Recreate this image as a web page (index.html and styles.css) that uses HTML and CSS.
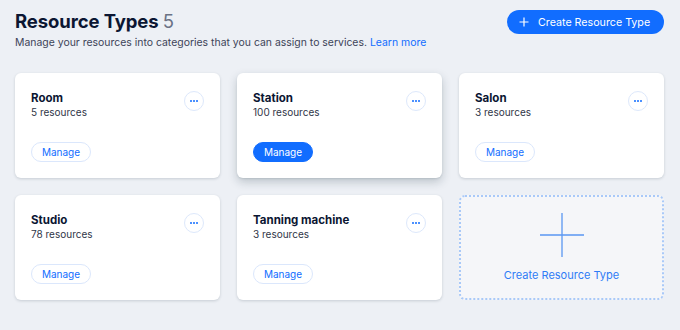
FILE: index.html
```html
<!DOCTYPE html>
<html lang="en">
<head>
<meta charset="utf-8">
<link rel="stylesheet" href="styles.css">
</head>
<body>
<div class="page">
  <header class="header">
    <div class="heading">
      <h1 class="title">Resource Types <span class="count">5</span></h1>
      <p class="subtitle">Manage your resources into categories that you can assign to services. <a class="link" href="#">Learn more</a></p>
    </div>
    <button class="primary-btn">
      <svg class="plus-icon" width="10" height="10" viewBox="0 0 10 10"><path d="M5 0.5V9.5M0.5 5H9.5" stroke="#fff" stroke-width="1.2"/></svg>
      <span>Create Resource Type</span>
    </button>
  </header>
  <div class="grid">
    <div class="card">
      <div class="card-top">
        <div>
          <div class="card-title">Room</div>
          <div class="card-sub">5 resources</div>
        </div>
        <button class="more"><span></span><span></span><span></span></button>
      </div>
      <button class="manage">Manage</button>
    </div>
    <div class="card card-hover">
      <div class="card-top">
        <div>
          <div class="card-title">Station</div>
          <div class="card-sub">100 resources</div>
        </div>
        <button class="more"><span></span><span></span><span></span></button>
      </div>
      <button class="manage manage-filled">Manage</button>
    </div>
    <div class="card">
      <div class="card-top">
        <div>
          <div class="card-title">Salon</div>
          <div class="card-sub">3 resources</div>
        </div>
        <button class="more"><span></span><span></span><span></span></button>
      </div>
      <button class="manage">Manage</button>
    </div>
    <div class="card">
      <div class="card-top">
        <div>
          <div class="card-title">Studio</div>
          <div class="card-sub">78 resources</div>
        </div>
        <button class="more"><span></span><span></span><span></span></button>
      </div>
      <button class="manage">Manage</button>
    </div>
    <div class="card">
      <div class="card-top">
        <div>
          <div class="card-title">Tanning machine</div>
          <div class="card-sub">3 resources</div>
        </div>
        <button class="more"><span></span><span></span><span></span></button>
      </div>
      <button class="manage">Manage</button>
    </div>
    <div class="add-card">
      <svg class="big-plus" width="44" height="44" viewBox="0 0 44 44"><path d="M22 0V44M0 22H44" stroke="#5a97f2" stroke-width="1.3"/></svg>
      <span class="add-text">Create Resource Type</span>
    </div>
  </div>
</div>
</body>
</html>
```
FILE: styles.css
```css
* { box-sizing: border-box; }
html, body { margin: 0; padding: 0; }
body {
  background: #edf0f5;
  font-family: Inter, "Noto Sans", "Liberation Sans", sans-serif;
  color: #0c1833;
  width: 680px;
  height: 330px;
  overflow: hidden;
}
.page { padding: 10px 16px 0 15px; }
.header {
  display: flex;
  justify-content: space-between;
  align-items: flex-start;
  height: 63px;
}
.title {
  margin: 0;
  font-size: 18.5px;
  font-weight: 700;
  line-height: 22px;
  letter-spacing: -0.1px;
  color: #0b1632;
}
.count { font-weight: 400; color: #6b7285; }
.subtitle {
  margin: 4px 0 0;
  font-size: 10.45px;
  line-height: 14px;
  color: #3d4459;
}
.link { color: #116dff; text-decoration: none; }
.primary-btn {
  display: flex;
  align-items: center;
  gap: 9px;
  height: 24px;
  width: 157px;
  padding: 0 0 0 12px;
  border: none;
  border-radius: 12px;
  background: #116dff;
  color: #fff;
  font-family: inherit;
  font-size: 10.7px;
  cursor: pointer;
}
.plus-icon { flex: none; }
.grid {
  display: grid;
  grid-template-columns: repeat(3, 205px);
  grid-auto-rows: 105px;
  gap: 17px;
}
.card {
  background: #fff;
  border-radius: 6px;
  box-shadow: 0 1px 3px rgba(22, 45, 61, 0.18);
  padding: 18px 16px 16px 16px;
  display: flex;
  flex-direction: column;
  justify-content: space-between;
  align-items: flex-start;
}
.card-hover { box-shadow: 0 4px 10px rgba(22, 45, 61, 0.22), 0 1px 2px rgba(22,45,61,0.1); }
.card-top {
  display: flex;
  justify-content: space-between;
  align-items: flex-start;
  width: 100%;
}
.card-title {
  font-size: 11.5px;
  font-weight: 700;
  line-height: 14px;
  color: #0b1632;
}
.card-sub {
  font-size: 10px;
  line-height: 14px;
  color: #2f3547;
}
.more {
  width: 20px;
  height: 20px;
  margin-right: 0;
  border: 1px solid #dde8fb;
  border-radius: 50%;
  background: #fff;
  display: flex;
  align-items: center;
  justify-content: center;
  gap: 1px;
  padding: 0;
}
.more span {
  width: 2px;
  height: 2px;
  border-radius: 50%;
  background: #116dff;
}
.manage {
  height: 20px;
  width: 60px;
  border: 1px solid #dbe7fc;
  border-radius: 10px;
  background: #fff;
  color: #116dff;
  font-family: inherit;
  font-size: 10px;
  padding: 0;
  cursor: pointer;
}
.manage-filled { background: #116dff; border-color: #116dff; color: #fff; }
.add-card {
  border: 2px dotted #a9c9f8;
  border-radius: 6px;
  background: #f5f6f9;
  display: flex;
  flex-direction: column;
  align-items: center;
  padding-top: 16px;
}
.add-text {
  margin-top: 11px;
  font-size: 11px;
  color: #2f7cf6;
}
```
